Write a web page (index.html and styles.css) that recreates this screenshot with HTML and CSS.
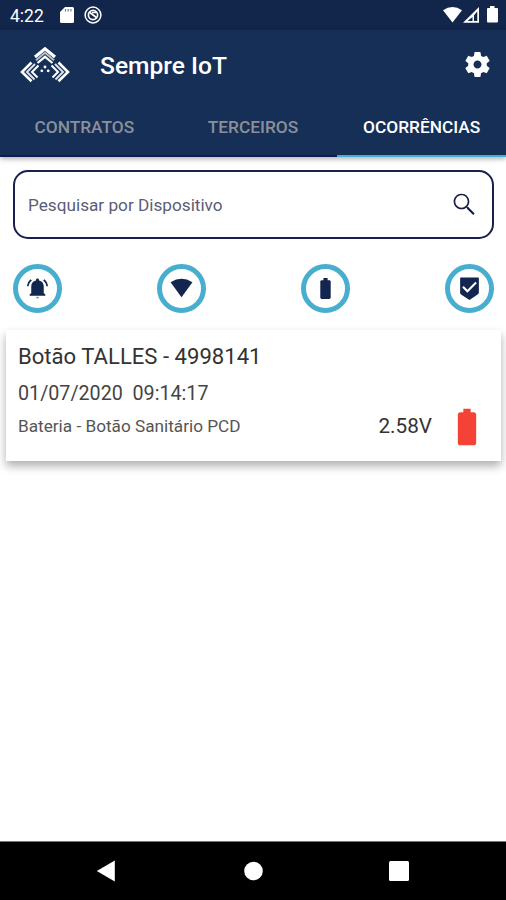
FILE: index.html
```html
<!DOCTYPE html>
<html lang="pt-BR">
<head>
<meta charset="utf-8">
<title>Sempre IoT</title>
<link rel="stylesheet" href="styles.css">
</head>

<body>
<div class="status">
  <span class="clock">4:22</span>
  <svg class="sd" width="14" height="16" viewBox="0 0 14 16"><path fill="#fff" d="M5 0h7.500q1.500 0 1.500 1.500v13q0 1.500-1.500 1.500h-11q-1.500 0-1.500-1.500v-9.500z"/><path stroke="#6d7990" stroke-width="1.200" d="M5.500 2v2.500M8.200 2v2.500M10.900 2v2.500"/></svg>
  <svg class="sync" width="18" height="18" viewBox="0 0 18 18" fill="none" stroke="#fff"><circle cx="9" cy="9" r="7.900" stroke-width="1.500"/><circle cx="9" cy="9" r="4.600" stroke-width="1.700"/><path stroke-width="1.700" d="M5 6l7.500 5.500M8 6.500h4.500"/></svg>
  <svg class="signal" width="56" height="18" viewBox="0 0 56 18" fill="#fff"><path d="M0 4.300q9.500-6.800 19 0L9.500 16.500z"/><path fill-rule="evenodd" d="M36 1v15.700h-16zM34.300 5.500v9.500h-3.300V9.200zM29.500 11v4h-5z"/><path d="M47 0h4.500v2h2.500q1 0 1 1v12.500q0 1-1 1h-9q-1 0-1-1V3q0-1 1-1h2z"/></svg>
</div>

<div class="header">
  <div class="appbar">
    <svg class="logo" width="50" height="36" viewBox="0 0 50 36" fill="none" stroke="#fff">
      <path stroke-width="3.200" d="M15 10L25 1.800 35 10"/>
      <path stroke="#b9c1ce" stroke-width="2" d="M16 13.200l9-7.400 9 7.400"/>
      <path stroke-width="2.200" d="M17.500 16l7.500-6.200 7.500 6.200"/>
      <path stroke-width="2.600" d="M11.500 15.500L2 25l9.500 9.300M38.500 15.500L48 25l-9.500 9.300"/>
      <path stroke="#dde2ea" stroke-width="2" d="M15 17l-8 8 7.500 7.500M35 17l8 8-7.500 7.500"/>
      <path stroke-width="2" d="M18.500 18.500L12 25l5.500 5.500M31.500 18.500L38 25l-5.500 5.500"/>
      <g fill="#fff" stroke="none"><circle cx="25" cy="20" r="1.400"/><circle cx="21.800" cy="23.800" r="1.400"/><circle cx="28.200" cy="23.800" r="1.400"/></g>
    </svg>
    <h1>Sempre IoT</h1>
    <svg class="gear" width="31" height="31" viewBox="0 0 24 24"><path fill="#fff" d="M19.140 12.940c.04-.3.060-.61.060-.94 0-.32-.02-.64-.07-.94l2.030-1.580c.18-.14.23-.41.120-.61l-1.920-3.320c-.12-.22-.37-.29-.59-.22l-2.390.96c-.5-.38-1.030-.7-1.620-.94l-.36-2.540c-.04-.24-.24-.41-.48-.41h-3.840c-.24 0-.43.170-.47.410l-.36 2.540c-.59.240-1.130.570-1.620.940l-2.390-.96c-.22-.08-.47 0-.59.220L2.740 8.870c-.12.210-.08.470.120.610l2.030 1.580c-.05.300-.09.630-.09.940s.02.640.070.940l-2.030 1.580c-.18.140-.23.410-.12.610l1.920 3.320c.12.220.37.290.59.220l2.390-.96c.5.380 1.030.7 1.620.940l.36 2.540c.05.240.24.410.48.410h3.840c.24 0 .44-.17.470-.41l.36-2.540c.59-.24 1.130-.56 1.620-.94l2.390.96c.22.080.47 0 .59-.22l1.920-3.320c.12-.22.070-.47-.12-.61l-2.010-1.580zM12 15.100c-1.700 0-3.100-1.400-3.100-3.100s1.400-3.100 3.100-3.100 3.100 1.400 3.100 3.100-1.400 3.100-3.100 3.100z"/></svg>
  </div>
  <div class="tabs">
    <div class="tab"><span>CONTRATOS</span></div>
    <div class="tab"><span>TERCEIROS</span></div>
    <div class="tab active"><span>OCORRÊNCIAS</span></div>
  </div>
</div>

<div class="content">
  <div class="search">
    <span>Pesquisar por Dispositivo</span>
    <svg width="29" height="29" viewBox="0 0 24 24"><path fill="#151b4b" d="M15.500 14h-.79l-.28-.27C15.410 12.590 16 11.110 16 9.500 16 5.910 13.090 3 9.500 3S3 5.910 3 9.500 5.910 16 9.500 16c1.610 0 3.090-.59 4.230-1.570l.27.280v.79l5.200 5.200 1.200-1.200-4.900-5zm-6 .6C6.680 14.600 4.400 12.320 4.400 9.500S6.680 4.400 9.500 4.400s5.100 2.280 5.100 5.100-2.280 5.100-5.100 5.100z"/></svg>
  </div>

  <div class="filters">
    <div class="filter"><svg width="25" height="25" viewBox="0 0 24 24"><path d="M6.600 4.300L5.300 3C3.300 4.700 2.200 7 1.900 9.800h1.600c.2-2.200 1.400-4 3.100-5.500zm13.900 5.500h1.600c-.3-2.800-1.400-5.100-3.400-6.800l-1.300 1.300c1.700 1.500 2.900 3.300 3.100 5.500zM18 10c0-3.070-1.640-5-4.500-5.700V4c0-.83-.67-1.500-1.500-1.500s-1.500.67-1.500 1.500v.3C7.630 5 6 6.920 6 10v6.500l-1.500 1V19h15v-1.500l-1.500-1z"/><path class="clapper" d="M10.800 20h2.400v1.500h-2.400z"/></svg></div>
    <div class="filter"><svg width="25" height="25" viewBox="0 0 24 24"><path d="M1.500 6Q12-.5 22.500 6L12 20.500z"/></svg></div>
    <div class="filter"><svg width="25" height="25" viewBox="0 0 24 24"><path d="M15.670 4H14V2h-4v2H8.330C7.600 4 7 4.600 7 5.330v15.330C7 21.400 7.600 22 8.330 22h7.330c.74 0 1.340-.6 1.340-1.330V5.330C17 4.600 16.400 4 15.670 4z"/></svg></div>
    <div class="filter"><svg width="25" height="25" viewBox="0 0 24 24"><path d="M20 1.500H4c-.6 0-1 .4-1 1V16c0 .69.350 1.300.88 1.660L12 23l8.110-5.410c.53-.36.880-.97.880-1.660V2.500c0-.6-.4-1-1-1zM10 16l-5-5 1.410-1.410L10 13.170l7.590-7.590L19 7l-9 9z"/></svg></div>
  </div>

  <div class="card">
    <div class="info">
      <div class="device">Botão TALLES - 4998141</div>
      <div class="date">01/07/2020&nbsp; 09:14:17</div>
      <div class="kind">Bateria - Botão Sanitário PCD</div>
    </div>
    <span class="volts">2.58V</span>
    <svg class="level" width="44" height="44" viewBox="0 0 24 24"><path fill="#f44336" d="M15.670 4H14V2h-4v2H8.330C7.600 4 7 4.600 7 5.330v15.330C7 21.400 7.600 22 8.330 22h7.330c.74 0 1.340-.6 1.340-1.330V5.330C17 4.600 16.400 4 15.670 4z"/></svg>
  </div>
</div>

<div class="navbar">
  <svg width="20" height="22" viewBox="0 0 20 22"><path fill="#fff" d="M18.800.5v21L.8 11z"/></svg>
  <svg width="20" height="20" viewBox="0 0 20 20"><circle cx="10.500" cy="10" r="9.300" fill="#fff"/></svg>
  <svg width="20" height="20" viewBox="0 0 20 20"><rect width="20" height="20" rx="1.500" fill="#fff"/></svg>
</div>
</body>
</html>
```
FILE: styles.css
```css
* {
  box-sizing: border-box;
}

body {
  margin: 0;
  height: 900px;
  display: flex;
  flex-direction: column;
  overflow: hidden;
  background: #fff;
  font-family: Roboto, sans-serif;
}

svg {
  display: block;
  flex: none;
}

span, h1, .info div {
  white-space: nowrap;
}

.status {
  height: 30px;
  flex: none;
  display: flex;
  align-items: center;
  padding: 0 7px 0 10px;
  background: #12254a;
  color: #fff;
}

.clock {
  width: 50px;
  padding-top: 1px;
  font-size: 17.500px;
}

.sync {
  margin-left: 10px;
}

.signal {
  margin-left: auto;
}

.header {
  height: 127px;
  flex: none;
  background: #162f57;
  box-shadow: 0 2px 5px rgba(0, 0, 0, .3);
}

.appbar {
  height: 69px;
  display: flex;
  align-items: center;
  padding: 0 13px 0 20px;
}

h1 {
  margin: 1px 0 0 30px;
  font-size: 24.600px;
  font-weight: 500;
  color: #fff;
}

.gear {
  margin-left: auto;
}

.tabs {
  height: 58px;
  display: flex;
}

.tab {
  flex: 1;
  display: flex;
  justify-content: center;
  padding-top: 17px;
  border-bottom: 2px solid #101c50;
  font-size: 17.300px;
  line-height: 22px;
  font-weight: 500;
  color: #8b8f98;
}

.active {
  color: #fff;
  border-bottom-color: #47aed0;
}

.content {
  flex: 1;
}

.search {
  height: 69px;
  margin: 13px 12px 0 13px;
  padding: 0 13px 0 13px;
  display: flex;
  align-items: center;
  justify-content: space-between;
  border: 2px solid #1a1f4d;
  border-radius: 15px;
  font-size: 17.200px;
  color: #5b5d76;
}

.filters {
  margin: 25px 12px 0 13px;
  display: flex;
  justify-content: space-between;
}

.filter {
  width: 49px;
  height: 49px;
  display: flex;
  align-items: center;
  justify-content: center;
  border: 5px solid #47aed0;
  border-radius: 50%;
  fill: #132650;
}

.clapper {
  fill: #8a8f9e;
}

.card {
  height: 131px;
  margin: 17px 5px 0 6px;
  padding: 12px 12px 0;
  display: flex;
  background: #fff;
  box-shadow: 0 5px 9px rgba(0, 0, 0, .32);
  color: #333;
}

.info {
  width: 361px;
}

.device {
  font-size: 22.100px;
  line-height: 28px;
}

.date {
  margin-top: 10px;
  font-size: 19.700px;
  line-height: 27px;
  color: #444;
}

.kind {
  margin-top: 8px;
  font-size: 17.200px;
  line-height: 22px;
  color: #555;
}

.volts {
  margin-top: 71px;
  font-size: 20.700px;
  line-height: 26px;
}

.level {
  margin: 63px 0 0 13px;
}

.navbar {
  height: 59px;
  flex: none;
  display: flex;
  align-items: center;
  justify-content: space-between;
  padding: 0 97px 0 96px;
  border-top: 1px solid #777;
  background: #000;
}
```
